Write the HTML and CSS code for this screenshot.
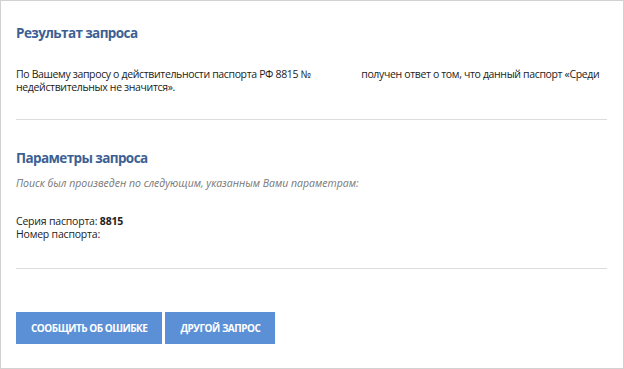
FILE: index.html
```html
<!DOCTYPE html>
<html>
    <head>
        <meta charset="UTF-8">
        <meta name="viewport" content="width=device-width, initial-scale=1.0">
        <title>Результат запроса</title>
        <link rel="stylesheet" href="styles.css">
    </head>

    <body>
        <div class="frame">
            <div class="section">
                <h2 class="title">Результат запроса</h2>
                <p class="text">По Вашему запросу о действительности паспорта РФ 8815 № <span class="after-num">получен ответ о том, что данный паспорт «Среди недействительных не значится».</span></p>
            </div>

            <div class="section params">
                <h2 class="title">Параметры запроса</h2>
                <p class="note">Поиск был произведен по следующим, указанным Вами параметрам:</p>
                <div class="fields">
                    <div>Серия паспорта: <b>8815</b></div>
                    <div>Номер паспорта: </div>
                </div>
            </div>

            <div class="actions">
                <button class="btn">Сообщить об ошибке</button>
                <button class="btn">Другой запрос</button>
            </div>
        </div>
    </body>
</html>
```

FILE: styles.css
```css
body {
    margin: 0;
    font-family: "Open Sans", Arial, sans-serif;
    color: #222;
}
.frame {
    width: 624px;
    height: 369px;
    box-sizing: border-box;
    border: 1px solid #d2d2d2;
    padding: 0 15px 0 15px;
    background: #fff;
}
.section {
    border-bottom: 1px solid #dcdcdc;
    padding-top: 22px;
    padding-bottom: 25px;
    margin-right: 1px;
}
.params {
    padding-top: 28px;
    padding-bottom: 27px;
}
.title {
    margin: 0;
    font-size: 13.5px;
    font-weight: 700;
    letter-spacing: -0.6px;
    color: #3d5f94;
    line-height: 20px;
}
.text {
    margin: 25px 0 0 0;
    font-size: 10.5px;
    letter-spacing: -0.35px;
    line-height: 13px;
}
.after-num {
    padding-left: 48px;
}
.note {
    margin: 8px 0 0 0;
    font-size: 10.5px;
    font-style: italic;
    color: #777;
    line-height: 14px;
}
.fields {
    margin-top: 25px;
    font-size: 10.5px;
    letter-spacing: -0.2px;
    line-height: 13px;
}
.fields b {
    font-weight: 700;
}
.actions {
    display: flex;
    gap: 3px;
    padding-top: 43px;
}
.btn {
    height: 32px;
    background-color: #5b8fd6;
    color: #fff;
    border: none;
    font-family: "Open Sans", Arial, sans-serif;
    font-size: 10px;
    font-weight: 700;
    text-transform: uppercase;
    letter-spacing: -0.5px;
    padding: 0 15px;
    cursor: pointer;
}
```
